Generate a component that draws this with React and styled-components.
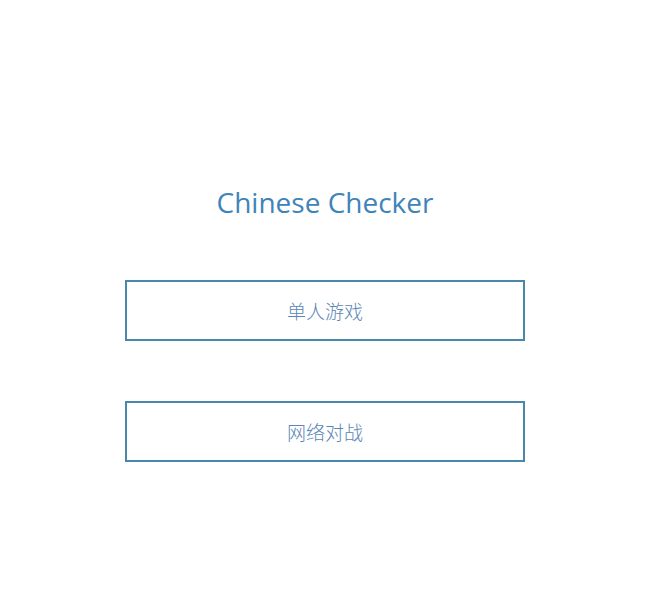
import styled, { createGlobalStyle } from "styled-components";

const GlobalStyle = createGlobalStyle`
  html, body {
    margin: 0;
    padding: 0;
    background: #ffffff;
  }
`;

const Page = styled.div`
  width: 650px;
  display: flex;
  flex-direction: column;
  align-items: center;
  padding-top: 180px;
`;

const Title = styled.h1`
  margin: 0;
  height: 44px;
  line-height: 44px;
  font-family: "Open Sans", "Noto Sans", sans-serif;
  font-weight: 400;
  font-size: 28px;
  color: #3f84b8;
`;

const Menu = styled.div`
  display: flex;
  flex-direction: column;
  gap: 60px;
  margin-top: 56px;
`;

const MenuButton = styled.button`
  box-sizing: border-box;
  width: 400px;
  height: 61px;
  padding: 0;
  background: #ffffff;
  border: 2px solid #4a88aa;
  font-family: "Noto Sans CJK SC", "Noto Sans", sans-serif;
  font-weight: 300;
  font-size: 19px;
  color: #5a88b5;
  cursor: pointer;
`;

export default function App() {
  return (
    <>
      <GlobalStyle />
      <Page>
        <Title>Chinese Checker</Title>
        <Menu>
          <MenuButton>单人游戏</MenuButton>
          <MenuButton>网络对战</MenuButton>
        </Menu>
      </Page>
    </>
  );
}
